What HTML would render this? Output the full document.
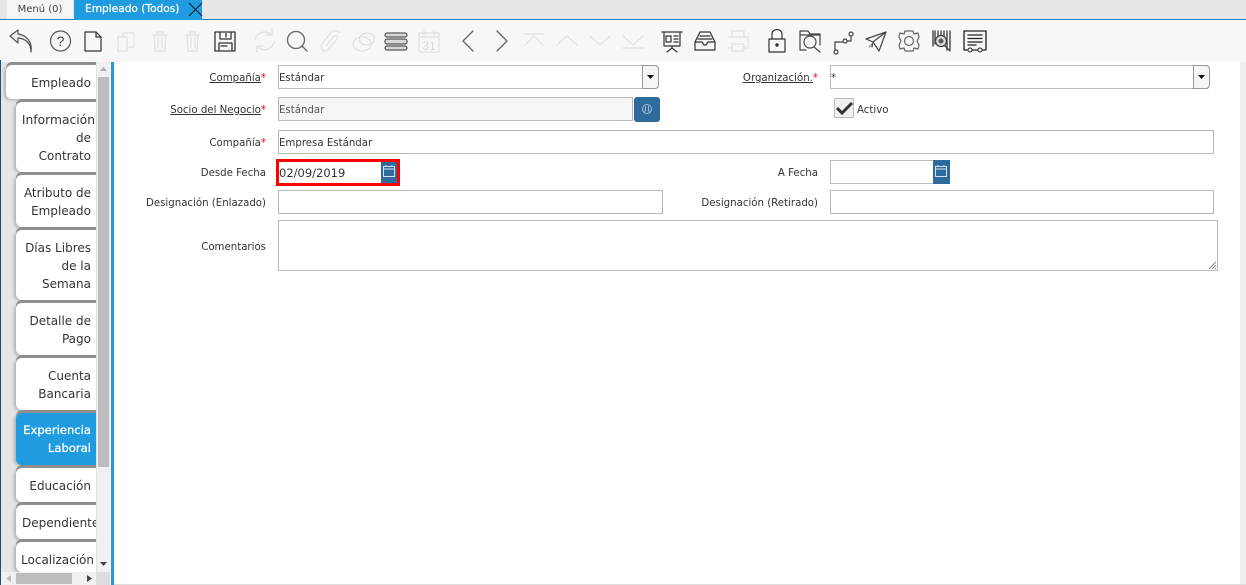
<!DOCTYPE html>
<html lang="es"><head><meta charset="utf-8"><style>
html,body{margin:0;padding:0;width:1246px;height:585px;overflow:hidden;background:#fff}
body{position:relative;font-family:"DejaVu Sans","Liberation Sans",sans-serif;color:#333}
div,span{position:absolute;box-sizing:border-box}
.tab{left:16px;width:80px;background:#fff;border-radius:6px 0 0 6px;box-shadow:-2px 1px 3px #b0b0b0,0 -3px 0 #8c8c8c;text-align:right;padding:9px 5px 0 0;font-size:12px;line-height:18px;color:#333;white-space:nowrap;overflow:hidden}
.l{font-size:10.2px;line-height:14px;text-align:right;color:#333;white-space:nowrap}
.l u{text-decoration:underline}.l b{color:#e00;font-weight:normal}
.f{border:1px solid #b9b9b9;background:#fff;font-size:10.2px;line-height:25px;padding-left:0;color:#333;white-space:nowrap}
.cal{background:#2f6a9c}
</style></head><body>
<div style="left:0;top:0;width:1246px;height:19px;background:#e6e6e6"></div>
<div style="left:0;top:19px;width:1246px;height:1px;background:#1f7fbf"></div>
<div style="left:7px;top:0;width:66px;height:19px;background:#f5f5f5;font-size:10px;line-height:19px;text-align:center;color:#444">Menú (0)</div>
<div style="left:74px;top:0;width:128px;height:20px;background:#1f9be0;color:#fff;font-size:10.6px;line-height:19px;padding-left:11px;-webkit-text-stroke:.25px #fff">Empleado (Todos)</div>
<svg style="position:absolute;left:188px;top:2px" width="15" height="15"><path d="M1 1L14 14M14 1L1 14" stroke="#123" stroke-width="1.1" fill="none"/></svg>
<div style="left:0;top:20px;width:1246px;height:42px;background:#f7f7f7"></div>

<svg style="position:absolute;left:0;top:20px" width="1000" height="40" viewBox="0 20 1000 40" fill="none" stroke-linejoin="round" stroke-linecap="round">
<g stroke="#555" stroke-width="1.2">
<path d="M31 52C31 44 27 39 18 38V43L10 36L18 30V34C26 35 33 42 31 52Z" fill="#eee"/>
<circle cx="60.500" cy="41" r="10"/>
</g>
<text x="60.500" y="46" font-size="14" fill="#444" text-anchor="middle" font-family="Liberation Sans">?</text>
<path d="M85 32H96L101 37V51H85Z M96 32V37H101" stroke="#333" stroke-width="1.2"/>
<g stroke="#e0e0e0" stroke-width="1.2">
<path d="M118 37H127V51H118Z M123 37V33H134V47H127"/>
<path d="M153 35H167M157 35V32H163V35M154 35L155 51H165L166 35M158 38V48M162 38V48"/>
<path d="M186 35H199M190 35V32H195V35M187 35L188 51H197L198 35M191 38V48M195 38V48"/>
<path d="M255 40C256 33 265 29 272 35M274 42C273 49 263 53 257 46M272 29V35H266M257 52V46H263"/>
<path d="M340 33C337 29 332 31 330 34L322 44C319 49 325 54 329 49L337 39C339 36 335 34 333 37L326 46"/>
<ellipse cx="362" cy="44" rx="9" ry="7" fill="#f7f7f7"/><ellipse cx="367" cy="39" rx="7.500" ry="6"/>
<path d="M419 33H439V52H419ZM419 37H439M424 31V35M434 31V35"/>
<path d="M524 34H544M525 45L534 36L543 45M557 45L567 36L577 45M590 36L600 45L610 36M623 36L633 45L643 36M623 48H643"/>
</g>
<text x="429" y="50" font-size="12" fill="#d8d8d8" text-anchor="middle" font-family="Liberation Sans">31</text>
<g stroke="#666" stroke-width="1.3">
<path d="M473 31L463 41L473 51M497 31L507 41L497 51"/>
<circle cx="296" cy="40" r="8.500"/><path d="M302 46L307 51"/>
</g>
<path d="M215 32H235V51H215ZM220 32V39H231V32M226 33.500V37M219 43H232V51H219ZM221 46H227" stroke="#333" stroke-width="1.3"/>
<g stroke="#555" stroke-width="1.2" fill="#d8d8d8"><rect x="385" y="33" width="22" height="4" rx="2"/><rect x="385" y="39" width="22" height="5" rx="2"/><rect x="385" y="46" width="22" height="4" rx="2"/></g>
<g stroke="#333" stroke-width="1.2">
<path d="M662 32H682M664 32V46H680V32M672 46V48M667 52L672 48L677 52M666 36H671V42H666ZM674 36H678M674 39H678M674 42H678"/>
<path d="M695 50V42L700 32H710L715 42V50ZM695 42H702L704 45H706L708 42H715M700 36H710M698 39H712"/>
</g>
<path d="M728 37H748V48H744M732 48H728ZM732 37V31H744V37M732 44H744V51H732Z" stroke="#e0e0e0" stroke-width="1.2"/>
<path d="M769 39H785V52H769ZM772 39V34C772 28 782 28 782 34V39" stroke="#333" stroke-width="1.2"/>
<circle cx="777" cy="45" r="1.700" fill="#333"/>
<g stroke="#444" stroke-width="1.2">
<path d="M800 50V31H808L810 34H820V45M800 35H820M800 50H806"/>
<circle cx="810" cy="42" r="6"/><path d="M814 47L820 52"/>
<path d="M835 50V42H843M847 41H851V36M836 50a2 2 0 1 0 .1 0M845 39a2 2 0 1 0 .1 0M851 32a2 2 0 1 0 .1 0"/>
<path d="M866 39L886 32L879 51L873 42ZM873 42L886 32M873 42L872 47"/>
</g>
<path d="M869 47L873 43" stroke="#777"/>
<g stroke="#666" stroke-width="1.200">
<path d="M905 31H913L914 34L918 33L919 37L917 41L919 45L918 49L914 48L913 51H905L904 48L900 49L899 45L901 41L899 37L900 33L904 34Z"/>
<circle cx="909" cy="41" r="4.500"/>
</g>
<path d="M933 31V46M935 31V44M938 31V36M941 31V35M944 31V37M947 31V50M950 31V50" stroke="#444" stroke-width="1.400"/>
<circle cx="941" cy="41" r="5.500" stroke="#444" stroke-width="1.300" fill="#ddd"/><circle cx="941" cy="41" r="2.500" fill="#555"/><path d="M945 46L950 51" stroke="#444" stroke-width="1.300"/>
<path d="M964 31H986V50H964ZM968 35H982M968 38.500H982M968 42H982M968 45H976" stroke="#222" stroke-width="1.300"/>
<circle cx="970" cy="50" r="2" fill="#f7f7f7" stroke="#222"/><circle cx="980" cy="50" r="2" fill="#f7f7f7" stroke="#222"/>
</svg>

<!-- left panel -->
<div style="left:0;top:60px;width:1px;height:525px;background:#164f7c"></div>
<div style="left:1px;top:62px;width:96px;height:510px;background:#e6e6e6"></div>
<div style="left:97px;top:62px;width:13px;height:510px;background:#f0f0f0"></div>
<div style="left:98px;top:77px;width:11px;height:390px;background:#bdbdbd"></div>
<svg style="position:absolute;left:97px;top:64px" width="13" height="10"><path d="M3 7L6.500 3L10 7Z" fill="#aaa"/></svg>
<svg style="position:absolute;left:97px;top:559px" width="13" height="10"><path d="M3 3H10L6.500 7Z" fill="#444"/></svg>
<div class="tab" style="left:6px;width:90px;top:65px;height:34px">Empleado</div>
<div class="tab" style="top:102px;height:70px;padding-right:1px"><span style="position:static;font-size:12.3px">Información</span><br><span style="position:static;padding-right:4px">de</span><br><span style="position:static;padding-right:4px">Contrato</span></div>
<div class="tab" style="top:175px;height:52px">Atributo de<br>Empleado</div>
<div class="tab" style="top:230px;height:70px">Días Libres<br>de la<br>Semana</div>
<div class="tab" style="top:303px;height:52px">Detalle de<br>Pago</div>
<div class="tab" style="top:358px;height:52px">Cuenta<br>Bancaria</div>
<div class="tab" style="top:413px;height:52px;padding-top:8px;background:#1f9be0;color:#fff;font-size:11.6px;-webkit-text-stroke:.25px #fff">Experiencia<br>Laboral</div>
<div class="tab" style="top:468px;height:34px">Educación</div>
<div class="tab" style="top:505px;height:34px;padding-right:0;text-align:left;padding-left:6px">Dependiente</div>
<div class="tab" style="top:542px;height:30px;padding-right:2px">Localización</div>
<div style="left:1px;top:572px;width:109px;height:13px;background:#f0f0f0"></div>
<div style="left:16px;top:573px;width:56px;height:11px;background:#bdbdbd"></div>
<div style="left:96px;top:572px;width:14px;height:13px;background:#ddd"></div>
<svg style="position:absolute;left:1px;top:572px" width="110" height="13"><path d="M10 3V10L5 6.500Z" fill="#bbb"/><path d="M86 3V10L91 6.500Z" fill="#444"/></svg>
<div style="left:111px;top:62px;width:3px;height:523px;background:#1f9be0"></div>
<div style="left:1240px;top:62px;width:6px;height:523px;background:#eee"></div>
<div style="left:114px;top:584px;width:1132px;height:1px;background:#ddd"></div>

<!-- form -->
<div class="l" style="left:140px;width:126px;top:72px"><u>Compañía</u><b>*</b></div>
<div class="f" style="left:278px;top:65px;width:381px;height:24px;border-radius:0 4px 4px 0">Estándar</div>
<div style="left:642px;top:65px;width:17px;height:24px;background:#f5f5f5;border:1px solid #999;border-radius:0 4px 4px 0"></div>
<svg style="position:absolute;left:647px;top:75px" width="8" height="5"><path d="M0 0H7L3.500 4Z" fill="#111"/></svg>
<div class="l" style="left:700px;width:118px;top:72px"><u>Organización.</u><b>*</b></div>
<div class="f" style="left:830px;top:65px;width:380px;height:24px;border-radius:0 4px 4px 0">*</div>
<div style="left:1193px;top:65px;width:17px;height:24px;background:#f5f5f5;border:1px solid #999;border-radius:0 4px 4px 0"></div>
<svg style="position:absolute;left:1198px;top:75px" width="8" height="5"><path d="M0 0H7L3.500 4Z" fill="#111"/></svg>

<div class="l" style="left:140px;width:126px;top:104px"><u>Socio del Negocio</u><b>*</b></div>
<div class="f" style="left:278px;top:97px;width:355px;height:24px;background:#f5f5f5;color:#555">Estándar</div>
<div style="left:634px;top:97px;width:26px;height:25px;background:#2f6a9c;border-radius:3px"></div>
<svg style="position:absolute;left:641px;top:103px" width="12" height="12" fill="none" stroke="#9dbdd8"><circle cx="6" cy="6" r="4.500"/><path d="M4.500 3V7L3 10M7.500 3V7L9 10"/></svg>
<div style="left:834px;top:98px;width:20px;height:20px;background:#f0f0f0;border:1px solid #b5bcc5"></div>
<svg style="position:absolute;left:835px;top:100px" width="19" height="17"><path d="M2 8L7 13L17 3" fill="none" stroke="#333" stroke-width="3"/></svg>
<div class="l" style="left:857px;top:104px">Activo</div>

<div class="l" style="left:140px;width:126px;top:137px">Compañía<b>*</b></div>
<div class="f" style="left:278px;top:130px;width:936px;height:24px">Empresa Estándar</div>

<div class="l" style="left:140px;width:126px;top:167px">Desde Fecha</div>
<div style="left:276px;top:159px;width:124px;height:27px;border:3px solid #f00;background:#fff;font-size:11.5px;line-height:22px;padding-left:0;color:#333">02/09/2019</div>
<div class="cal" style="left:381px;top:162px;width:16px;height:21px"></div>
<svg style="position:absolute;left:382px;top:164px" width="14" height="14" fill="none" stroke="#cfe3f3"><path d="M1.500 2.500H12.500V12.500H1.500ZM1.500 5H12.500M4 1V3M10 1V3"/></svg>
<div class="l" style="left:700px;width:118px;top:167px">A Fecha</div>
<div class="f" style="left:830px;top:160px;width:104px;height:24px;border-right:0"></div>
<div class="cal" style="left:933px;top:160px;width:17px;height:24px"></div>
<svg style="position:absolute;left:934px;top:164px" width="14" height="14" fill="none" stroke="#cfe3f3"><path d="M1.500 2.500H12.500V12.500H1.500ZM1.500 5H12.500M4 1V3M10 1V3"/></svg>

<div class="l" style="left:140px;width:126px;top:197px">Designación (Enlazado)</div>
<div class="f" style="left:278px;top:190px;width:385px;height:24px"></div>
<div class="l" style="left:680px;width:138px;top:197px">Designación (Retirado)</div>
<div class="f" style="left:830px;top:190px;width:384px;height:24px"></div>

<div class="l" style="left:140px;width:126px;top:241px">Comentarios</div>
<div class="f" style="left:278px;top:220px;width:940px;height:51px"></div>
<svg style="position:absolute;left:1208px;top:261px" width="9" height="9"><path d="M1 8L8 1M4 8L8 4M7 8L8 7" stroke="#666" stroke-width=".8"/></svg>
</body></html>
